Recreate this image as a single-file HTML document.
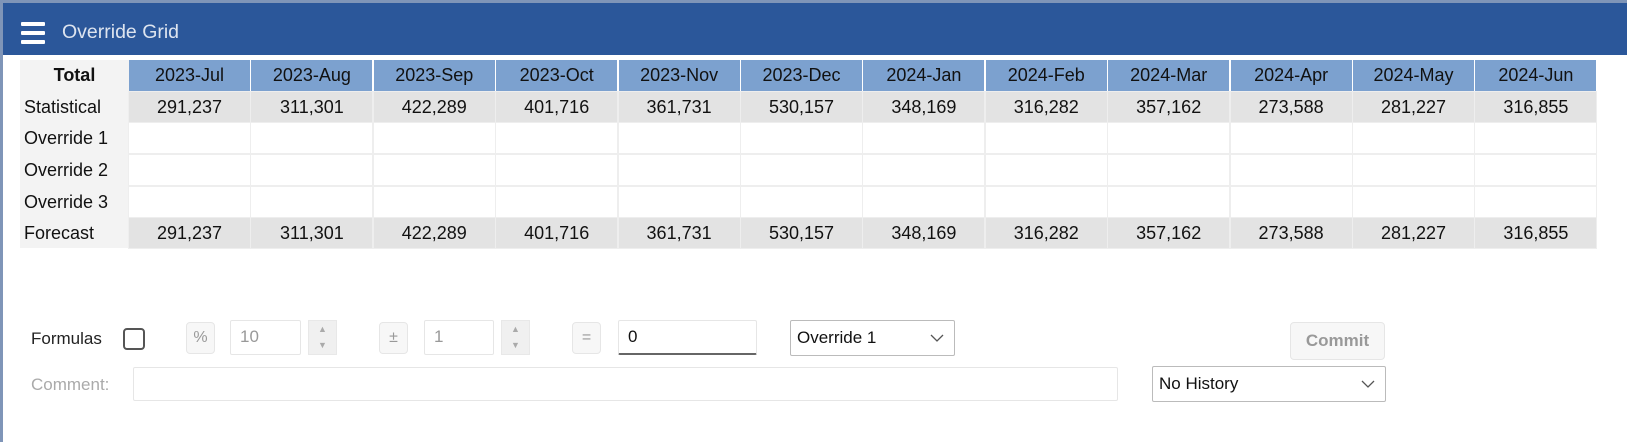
<!DOCTYPE html>
<html><head><style>
*{margin:0;padding:0;box-sizing:border-box}
body{width:1627px;height:442px;background:#fff;position:relative;overflow:hidden;font-family:"Liberation Sans",Arial,sans-serif}
.frame{position:absolute;left:0;top:0;width:3px;height:442px;background:#7f95b8}
.topf{position:absolute;left:0;top:0;width:1627px;height:3px;background:#7f95b8}
.bar{position:absolute;left:3px;top:3px;width:1624px;height:52px;background:#2b579a}
.hb{position:absolute;left:21px;width:24px;height:4px;background:#fff;border-radius:1px}
.title{position:absolute;left:62px;top:21px;font-size:19.5px;color:#dde4ef}
.cell{position:absolute;height:31px;font-size:18px;color:#111;text-align:center;line-height:31px}
.abs{position:absolute}
.lbl{font-size:17px;color:#222}
.btn{position:absolute;border:1px solid #e6e6e6;border-radius:4px;background:#f7f7f7;color:#999;font-size:16px;text-align:center;line-height:30px}
.inp{position:absolute;border:1px solid #e6e6e6;border-radius:2px;background:#fff;color:#999;font-size:17px;padding-left:9px;line-height:32px}
.spin{position:absolute;width:29px;height:35px;background:#f0f0f0;border:1px solid #e8e8e8}
.spin div{height:16px;text-align:center;font-size:9px;color:#aaa;line-height:16px}
.sel{position:absolute;border:1px solid #bbb;border-radius:2px;background:#fff;font-size:17px;color:#111;padding-left:6px;line-height:34px}
.sel svg{position:absolute;right:10px;top:13px}
</style></head><body>
<div class="frame"></div><div class="topf"></div>
<div class="bar"></div>
<div class="hb" style="top:22px"></div><div class="hb" style="top:31px"></div><div class="hb" style="top:40px"></div>
<div class="title">Override Grid</div>
<div id="grid"></div>
<div class="abs lbl" style="left:31px;top:329px">Formulas</div>
<div class="abs" style="left:123px;top:328px;width:22px;height:22px;border:2px solid #555;border-radius:4px"></div>
<div class="btn" style="left:186px;top:322px;width:29px;height:32px">%</div>
<div class="inp" style="left:230px;top:320px;width:71px;height:35px">10</div>
<div class="spin" style="left:308px;top:320px"><div>▲</div><div>▼</div></div>
<div class="btn" style="left:379px;top:322px;width:29px;height:32px">±</div>
<div class="inp" style="left:424px;top:320px;width:70px;height:35px">1</div>
<div class="spin" style="left:501px;top:320px"><div>▲</div><div>▼</div></div>
<div class="btn" style="left:572px;top:322px;width:29px;height:32px">=</div>
<div class="inp" style="left:618px;top:320px;width:139px;height:35px;color:#111;border-bottom:2px solid #666;font-size:17px">0</div>
<div class="sel" style="left:790px;top:320px;width:165px;height:36px">Override 1<svg width="14" height="8"><path d="M1 1 L7 7 L13 1" stroke="#555" stroke-width="1.3" fill="none"/></svg></div>
<div class="btn" style="left:1290px;top:322px;width:95px;height:38px;line-height:36px;font-weight:bold;font-size:17px;color:#999">Commit</div>
<div class="abs" style="left:31px;top:375px;font-size:17px;color:#aaa">Comment:</div>
<div class="inp" style="left:133px;top:367px;width:985px;height:34px"></div>
<div class="sel" style="left:1152px;top:366px;width:234px;height:36px">No History<svg width="14" height="8"><path d="M1 1 L7 7 L13 1" stroke="#555" stroke-width="1.3" fill="none"/></svg></div>
<script>
var m=["2023-Jul","2023-Aug","2023-Sep","2023-Oct","2023-Nov","2023-Dec","2024-Jan","2024-Feb","2024-Mar","2024-Apr","2024-May","2024-Jun"];
var v=["291,237","311,301","422,289","401,716","361,731","530,157","348,169","316,282","357,162","273,588","281,227","316,855"];
var labels=["Statistical","Override 1","Override 2","Override 3","Forecast"];
var rows=[60,92,123,155,187,218];var h="";
h+='<div class="cell" style="left:20px;top:60px;width:109px;height:188px;background:#f3f3f3"></div>';
h+='<div class="cell" style="left:20px;top:60px;width:109px;font-weight:bold">Total</div>';
for(var r=0;r<5;r++)h+='<div class="cell" style="left:22px;top:'+rows[r+1]+'px;width:105px;text-align:left;padding-left:2px;height:32px">'+labels[r]+'</div>';
for(var c=0;c<12;c++){var x=129+c*122.4;
h+='<div class="cell" style="left:'+x+'px;top:60px;width:121px;height:31px;background:#7ca1cf">'+m[c]+'</div>';
for(var r=0;r<5;r++){var y=rows[r+1],bg=(r==0||r==4)?'#e3e3e3':'#fff',t=(r==0||r==4)?v[c]:'';
h+='<div class="cell" style="left:'+x+'px;top:'+y+'px;width:121px;height:30px;background:'+bg+';outline:1px solid #eee">'+t+'</div>';}}
document.getElementById('grid').innerHTML=h;
</script>
</body></html>
